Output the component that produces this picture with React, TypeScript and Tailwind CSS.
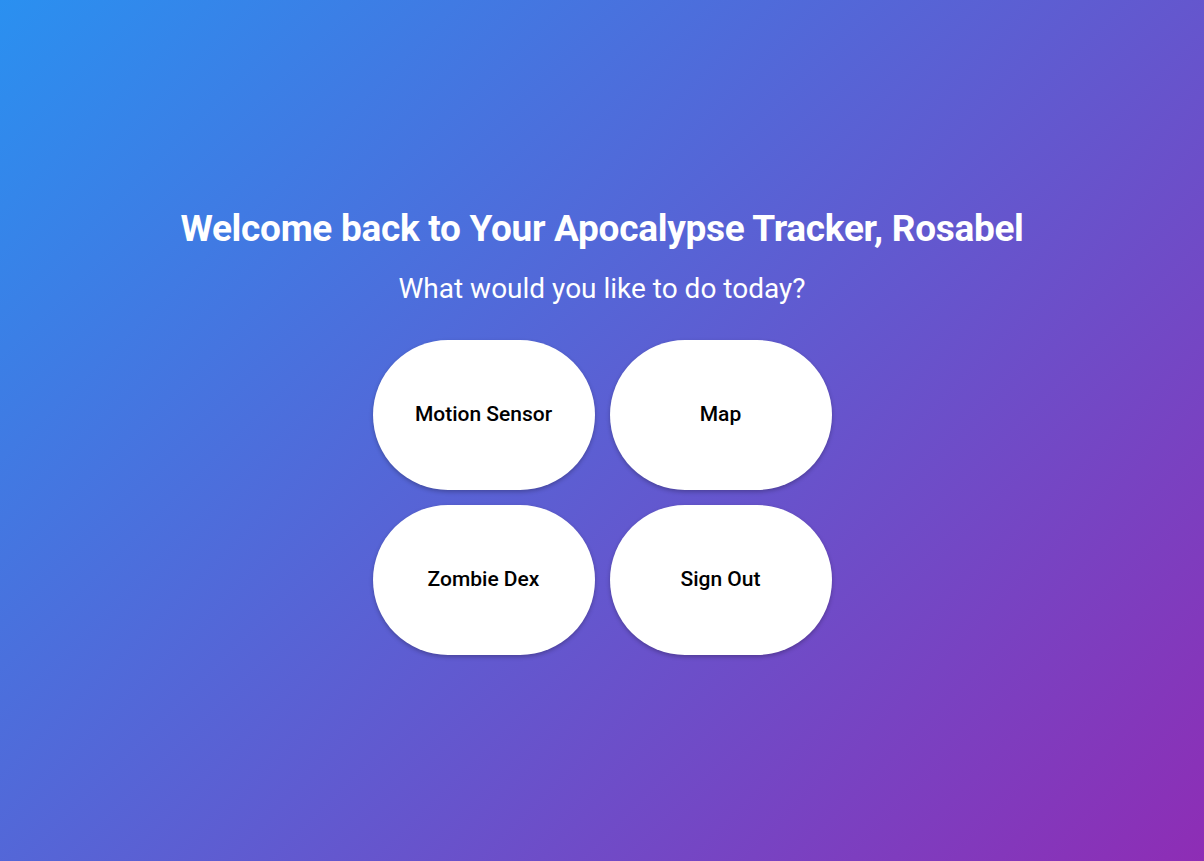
export default function App() {
  const items = ["Motion Sensor", "Map", "Zombie Dex", "Sign Out"];
  return (
    <div
      className="min-h-screen w-full flex flex-col items-center justify-center bg-[linear-gradient(135deg,#2a90f0,#8e2db5)] text-white"
      style={{ fontFamily: "Roboto, 'Liberation Sans', sans-serif" }}
    >
      <h1 className="text-[37px] font-bold leading-[44px] tracking-[-0.3px]">
        Welcome back to Your Apocalypse Tracker, Rosabel
      </h1>
      <p className="mt-[21px] text-[28px] leading-[34px]">What would you like to do today?</p>
      <div className="mt-[34px] grid grid-cols-2 gap-[15px]">
        {items.map((t) => (
          <button
            key={t}
            className="w-[222px] h-[150px] rounded-full bg-white text-black text-[21px] font-medium shadow-[0_2px_4px_rgba(0,0,0,0.25)]"
          >
            {t}
          </button>
        ))}
      </div>
    </div>
  );
}
